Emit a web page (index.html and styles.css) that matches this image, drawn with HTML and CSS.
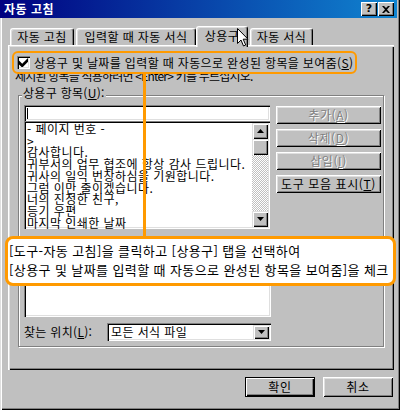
FILE: index.html
```html
<!DOCTYPE html>
<html lang="ko">
<head>
<meta charset="utf-8">
<title>자동 고침</title>
<link rel="stylesheet" href="styles.css">
</head>
<body>
<div class="window">
  <div class="titlebar">
    <span class="title">자동 고침</span>
    <div class="tb-buttons">
      <span class="tbtn help">?</span>
      <span class="tbtn close">
        <svg width="8" height="7" viewBox="0 0 8 7"><path d="M0 0h2l2 2 2-2h2L5 3.5 8 7H6L4 5 2 7H0l3-3.5z" fill="#000"/></svg>
      </span>
    </div>
  </div>

  <div class="tabs">
    <div class="tab t1">자동 고침</div>
    <div class="tab t2">입력할 때 자동 서식</div>
    <div class="tab t3 active">상용구</div>
    <div class="tab t4">자동 서식</div>
  </div>

  <div class="panel">
    <div class="hl">
      <span class="check">
        <svg width="9" height="9" viewBox="0 0 7 7"><path d="M0 2v3l2 2h1l4-4V0L2.5 4.5z" fill="#000"/></svg>
      </span>
      <span class="cb-label">상용구 및 날짜를 입력할 때 자동으로 완성된 항목을 보여줌(<u>S</u>)</span>
    </div>
    <div class="hint">제시된 항목을 적용하려면 &lt;Enter&gt; 키를 누르십시오.</div>

    <div class="group">
      <div class="glabel">상용구 항목(<u>U</u>):</div>
      <div class="grow">
        <div class="lcol">
          <div class="input"><span class="caret"></span></div>
          <div class="listbox">
            <div class="items">
              <div>- 페이지 번호 -</div>
              <div>&gt;</div>
              <div>감사합니다.</div>
              <div>귀부서의 업무 협조에 항상 감사 드립니다.</div>
              <div>귀사의 일익 번창하심을 기원합니다.</div>
              <div>그럼 이만 줄이겠습니다.</div>
              <div>너의 진정한 친구,</div>
              <div>등기 우편</div>
              <div>마지막 인쇄한 날짜</div>
            </div>
            <div class="vscroll">
              <div class="sbtn"><svg width="7" height="4" viewBox="0 0 7 4"><path d="M3.5 0L7 4H0z" fill="#000"/></svg></div>
              <div class="thumb"></div>
              <div class="track"></div>
              <div class="sbtn"><svg width="7" height="4" viewBox="0 0 7 4"><path d="M0 0h7L3.5 4z" fill="#000"/></svg></div>
            </div>
          </div>
          <div class="preview"></div>
        </div>
        <div class="rcol">
          <div class="btn disabled">추가(<u>A</u>)</div>
          <div class="btn disabled">삭제(<u>D</u>)</div>
          <div class="btn disabled">삽입(<u>I</u>)</div>
          <div class="btn">도구 모음 표시(<u>T</u>)</div>
        </div>
      </div>
      <div class="lookin">
        <span class="ll">찾는 위치(<u>L</u>):</span>
        <div class="combo">
          <span class="ctext">모든 서식 파일</span>
          <span class="cbtn"><svg width="7" height="4" viewBox="0 0 7 4"><path d="M0 0h7L3.5 4z" fill="#000"/></svg></span>
        </div>
      </div>
    </div>
  </div>

  <div class="footer">
    <div class="btn fbtn default">확인</div>
    <div class="btn fbtn">취소</div>
  </div>

  <div class="vline"></div>
  <div class="callout">
    <div>[도구-자동 고침]을 클릭하고 [상용구] 탭을 선택하여</div>
    <div>[상용구 및 날짜를 입력할 때 자동으로 완성된 항목을 보여줌]을 체크</div>
  </div>
  <svg class="cursor" width="12" height="20" viewBox="0 0 12 20"><path d="M0.5 0.5v15l3.5-3.5 2.5 6 2.2-1-2.5-5.8H11z" fill="#fff" stroke="#000" stroke-width="1"/></svg>
</div>
</body>
</html>
```

FILE: styles.css
```css
* { box-sizing: border-box; }
html, body { margin: 0; padding: 0; }
body {
  width: 400px;
  height: 410px;
  overflow: hidden;
  background: #c0c0c0;
  font-family: "Noto Sans CJK KR", "Noto Sans", sans-serif;
  font-size: 12px;
  color: #000;
}
u { text-decoration: underline; text-underline-offset: 1px; }

.window {
  position: relative;
  width: 400px;
  height: 410px;
  background: #c0c0c0;
  padding: 0 3px 3px 3px;
  display: flex;
  flex-direction: column;
  box-shadow: inset 1px 0 #dfdfdf, inset 2px 0 #fff, inset -1px -1px #000, inset -2px -2px #808080;
}

.titlebar {
  margin-left: -3px;
  height: 18px;
  flex: none;
  background: linear-gradient(to right, #000080, #1084d0);
  display: flex;
  align-items: center;
  justify-content: space-between;
  padding: 0 3px 0 4px;
}
.title {
  color: #fff;
  font-weight: bold;
  font-size: 12px;
  line-height: 18px;
  letter-spacing: 0.5px;
}
.tb-buttons { display: flex; gap: 1px; }
.tbtn {
  width: 16px;
  height: 14px;
  background: #c0c0c0;
  display: flex;
  align-items: center;
  justify-content: center;
  font-family: "DejaVu Sans", sans-serif;
  font-weight: bold;
  font-size: 11px;
  line-height: 14px;
  box-shadow: inset 1px 1px #fff, inset -1px -1px #000, inset -2px -2px #808080;
}

.tabs {
  flex: none;
  display: flex;
  align-items: flex-end;
  height: 19px;
  margin-top: 8px;
  padding-left: 7px;
  position: relative;
  z-index: 2;
}
.tab {
  height: 17px;
  line-height: 16px;
  text-align: center;
  background: #c0c0c0;
  border-top: 1px solid #fff;
  border-left: 1px solid #fff;
  border-right: 1px solid #000;
  border-radius: 3px 3px 0 0;
  box-shadow: inset -1px 0 #808080, inset 1px 1px #dfdfdf;
  font-size: 12px;
  letter-spacing: 0.4px;
  white-space: nowrap;
}
.t1 { width: 64px; }
.t2 { width: 120px; margin-left: 2px; }
.t3 { width: 52px; }
.t4 { width: 63px; margin-left: 2px; }
.tab.active {
  height: 21px;
  margin-bottom: -2px;
  line-height: 18px;
}

.panel {
  flex: none;
  margin-left: 5px;
  width: 386px;
  height: 325px;
  position: relative;
  box-shadow: inset 1px 1px #fff, inset 2px 2px #dfdfdf, inset -1px -1px #000, inset -2px -2px #808080;
  display: flex;
  flex-direction: column;
  align-items: flex-start;
}

.hl {
  position: relative;
  z-index: 1;
  margin: 6px 0 0 4px;
  width: 345px;
  height: 23px;
  border: 2px solid #ff9a00;
  border-radius: 6px;
  background: #c0c0c0;
  display: flex;
  align-items: center;
}
.check {
  margin-left: 3px;
  width: 13px;
  height: 13px;
  background: #fff;
  display: flex;
  align-items: center;
  justify-content: center;
  box-shadow: inset 1px 1px #808080, inset 2px 2px #000, inset -1px -1px #fff, inset -2px -2px #dfdfdf;
}
.cb-label {
  margin-left: 4px;
  line-height: 14px;
  letter-spacing: 0.35px;
  white-space: nowrap;
}
.hint {
  margin: -5px 0 0 7px;
  line-height: 14px;
  letter-spacing: -0.8px;
  white-space: nowrap;
}

.group {
  margin: 12px 0 0 10px;
  width: 366px;
  height: 252px;
  border: 1px solid #808080;
  box-shadow: inset 1px 1px #fff, 1px 1px #fff;
  padding: 0 0 0 5px;
}
.glabel {
  display: block;
  width: fit-content;
  margin: -10px 0 0 -2px;
  padding: 0 1px;
  background: #c0c0c0;
  line-height: 14px;
  letter-spacing: 0.3px;
}
.grow {
  display: flex;
  margin-top: 5px;
}
.lcol {
  width: 247px;
  display: flex;
  flex-direction: column;
}
.input, .listbox, .preview, .combo {
  background: #fff;
  box-shadow: inset 1px 1px #808080, inset 2px 2px #000, inset -1px -1px #fff, inset -2px -2px #dfdfdf;
}
.input {
  width: 246px;
  height: 16px;
  padding: 3px 0 0 3px;
}
.caret {
  display: block;
  width: 1px;
  height: 11px;
  background: #000;
}
.listbox {
  width: 246px;
  height: 108px;
  display: flex;
  padding: 2px;
}
.items {
  flex: 1;
  padding: 0 0 0 1px;
  line-height: 11.7px;
  font-size: 12px;
  letter-spacing: 0.45px;
  white-space: nowrap;
}
.vscroll {
  width: 16px;
  display: flex;
  flex-direction: column;
}
.sbtn, .thumb {
  height: 16px;
  background: #c0c0c0;
  display: flex;
  align-items: center;
  justify-content: center;
  box-shadow: inset 1px 1px #dfdfdf, inset 2px 2px #fff, inset -1px -1px #000, inset -2px -2px #808080;
}
.track {
  flex: 1;
  background: repeating-conic-gradient(#fff 0 25%, #c0c0c0 0 50%) 0 0 / 2px 2px;
}
.preview {
  margin-top: 11px;
  width: 247px;
  height: 77px;
}

.rcol {
  margin: 1px 0 0 5px;
  display: flex;
  flex-direction: column;
  gap: 5px;
}
.btn {
  width: 105px;
  height: 18px;
  background: #c0c0c0;
  text-align: center;
  line-height: 18px;
  letter-spacing: 0.6px;
  white-space: nowrap;
  box-shadow: inset 1px 1px #fff, inset -1px -1px #000, inset 2px 2px #dfdfdf, inset -2px -2px #808080;
}
.btn.disabled {
  color: #808080;
  text-shadow: 1px 1px #fff;
}

.lookin {
  margin-top: 6px;
  display: flex;
  align-items: center;
}
.ll { width: 83px; line-height: 14px; letter-spacing: 0.3px; }
.combo {
  width: 164px;
  height: 18px;
  display: flex;
  align-items: center;
  justify-content: space-between;
  padding: 2px;
}
.ctext { padding-left: 2px; line-height: 14px; letter-spacing: 0.4px; }
.cbtn {
  width: 16px;
  height: 14px;
  background: #c0c0c0;
  display: flex;
  align-items: center;
  justify-content: center;
  box-shadow: inset 1px 1px #dfdfdf, inset 2px 2px #fff, inset -1px -1px #000, inset -2px -2px #808080;
}

.footer {
  flex: none;
  margin-top: 7px;
  display: flex;
  justify-content: flex-end;
  gap: 8px;
  padding-right: 4px;
}
.fbtn {
  width: 70px;
  height: 20px;
  line-height: 20px;
}
.fbtn.default {
  box-shadow: inset 0 0 0 1px #000, inset 2px 2px #fff, inset -2px -2px #000, inset -3px -3px #808080;
}

.vline {
  position: absolute;
  left: 143px;
  top: 73px;
  width: 3px;
  height: 164px;
  background: #ff9a00;
}
.callout {
  position: absolute;
  left: 5px;
  top: 236px;
  width: 391px;
  height: 50px;
  background: #fff;
  border: 3px solid #ff9a00;
  border-radius: 8px;
  padding: 2px 0 0 1px;
  font-size: 13px;
  line-height: 19px;
  letter-spacing: 0.4px;
  white-space: nowrap;
  overflow: hidden;
  z-index: 3;
}
.cursor {
  position: absolute;
  left: 237px;
  top: 28px;
  z-index: 4;
}
```
